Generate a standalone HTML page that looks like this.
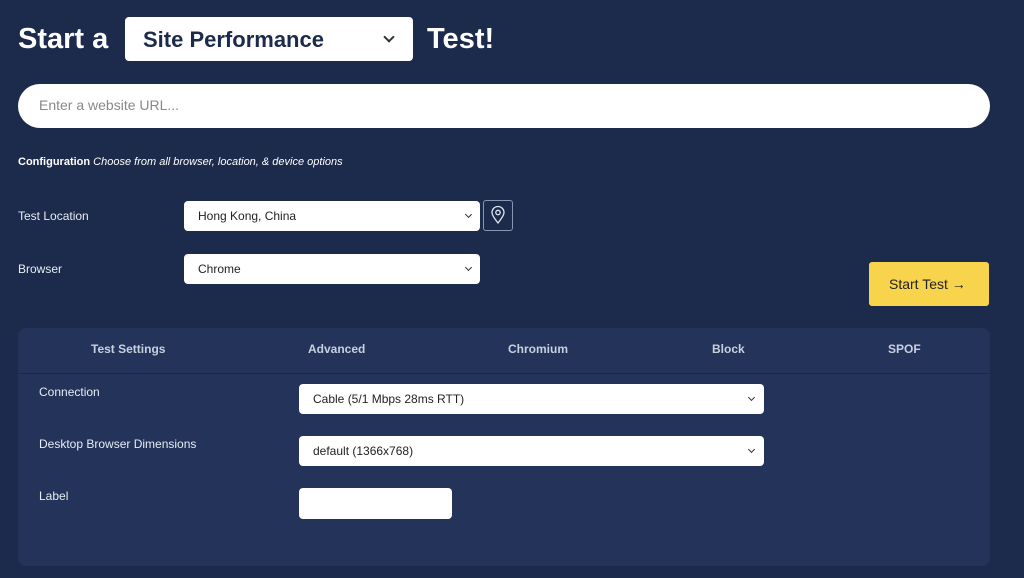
<!DOCTYPE html>
<html><head><style>
*{box-sizing:border-box;margin:0;padding:0}
body{width:1024px;height:578px;background:#1c2a4b;font-family:"Liberation Sans",sans-serif;color:#fff;position:relative;overflow:hidden}
.abs{position:absolute}
.h1{font-size:29px;font-weight:bold;top:23px}
.sel{background:#fff;border-radius:4px;color:#222}
.chev{position:absolute;width:6px;height:6px;border-right:1.5px solid #333;border-bottom:1.5px solid #333;transform:rotate(45deg)}
.lbl{font-size:12px;color:#e8ecf3}
.ss{font-size:12px;padding-left:14px;line-height:30px;height:30px}
.tab{font-size:12px;font-weight:bold;color:#c8d0de;top:342px}
</style></head><body>
<div class="abs h1" style="left:18px">Start a</div>
<div class="abs sel" style="left:125px;top:17px;width:288px;height:44px;font-size:22px;font-weight:bold;padding:10px 0 0 18px;color:#1c2a4b">Site Performance<div class="chev" style="left:260px;top:16px;width:8px;height:8px;border-width:2px"></div></div>
<div class="abs h1" style="left:427px">Test!</div>
<div class="abs" style="left:18px;top:84px;width:972px;height:44px;background:#fff;border-radius:22px;color:#888;font-size:14px;padding:13px 0 0 21px">Enter a website URL...</div>
<div class="abs" style="left:18px;top:156px;font-size:11px"><b>Configuration</b> <i>Choose from all browser, location, &amp; device options</i></div>
<div class="abs lbl" style="left:18px;top:209px">Test Location</div>
<div class="abs sel ss" style="left:184px;top:201px;width:296px">Hong Kong, China<div class="chev" style="left:282px;top:11px;width:5px;height:5px"></div></div>
<div class="abs" style="left:483px;top:200px;width:30px;height:31px;border:1px solid #8a97b3;border-radius:3px">
<svg width="28" height="29" viewBox="0 0 28 29"><path d="M14 22c-4-5-6-8-6-10.5a6 6 0 0 1 12 0c0 2.5-2 5.5-6 10.5z" fill="none" stroke="#dfe4ee" stroke-width="1.3"/><circle cx="14" cy="11.5" r="2.2" fill="none" stroke="#dfe4ee" stroke-width="1.3"/></svg></div>
<div class="abs lbl" style="left:18px;top:262px">Browser</div>
<div class="abs sel ss" style="left:184px;top:254px;width:296px">Chrome<div class="chev" style="left:282px;top:11px;width:5px;height:5px"></div></div>
<div class="abs" style="left:869px;top:262px;width:120px;height:44px;background:#f7d44c;border-radius:3px;color:#222;font-size:14px;padding:14px 0 0 20px;font-family:'Liberation Sans','DejaVu Sans',sans-serif">Start Test →</div>
<div class="abs" style="left:18px;top:328px;width:972px;height:238px;background:#23335a;border-radius:8px"></div>
<div class="abs" style="left:18px;top:373px;width:972px;height:1px;background:#1a2746"></div>
<div class="abs tab" style="left:91px">Test Settings</div>
<div class="abs tab" style="left:308px">Advanced</div>
<div class="abs tab" style="left:508px">Chromium</div>
<div class="abs tab" style="left:712px">Block</div>
<div class="abs tab" style="left:888px">SPOF</div>
<div class="abs lbl" style="left:39px;top:385px">Connection</div>
<div class="abs sel ss" style="left:299px;top:384px;width:465px">Cable (5/1 Mbps 28ms RTT)<div class="chev" style="left:450px;top:11px;width:5px;height:5px"></div></div>
<div class="abs lbl" style="left:39px;top:437px">Desktop Browser Dimensions</div>
<div class="abs sel ss" style="left:299px;top:436px;width:465px">default (1366x768)<div class="chev" style="left:450px;top:11px;width:5px;height:5px"></div></div>
<div class="abs lbl" style="left:39px;top:489px">Label</div>
<div class="abs sel" style="left:299px;top:488px;width:153px;height:31px"></div>
</body></html>
